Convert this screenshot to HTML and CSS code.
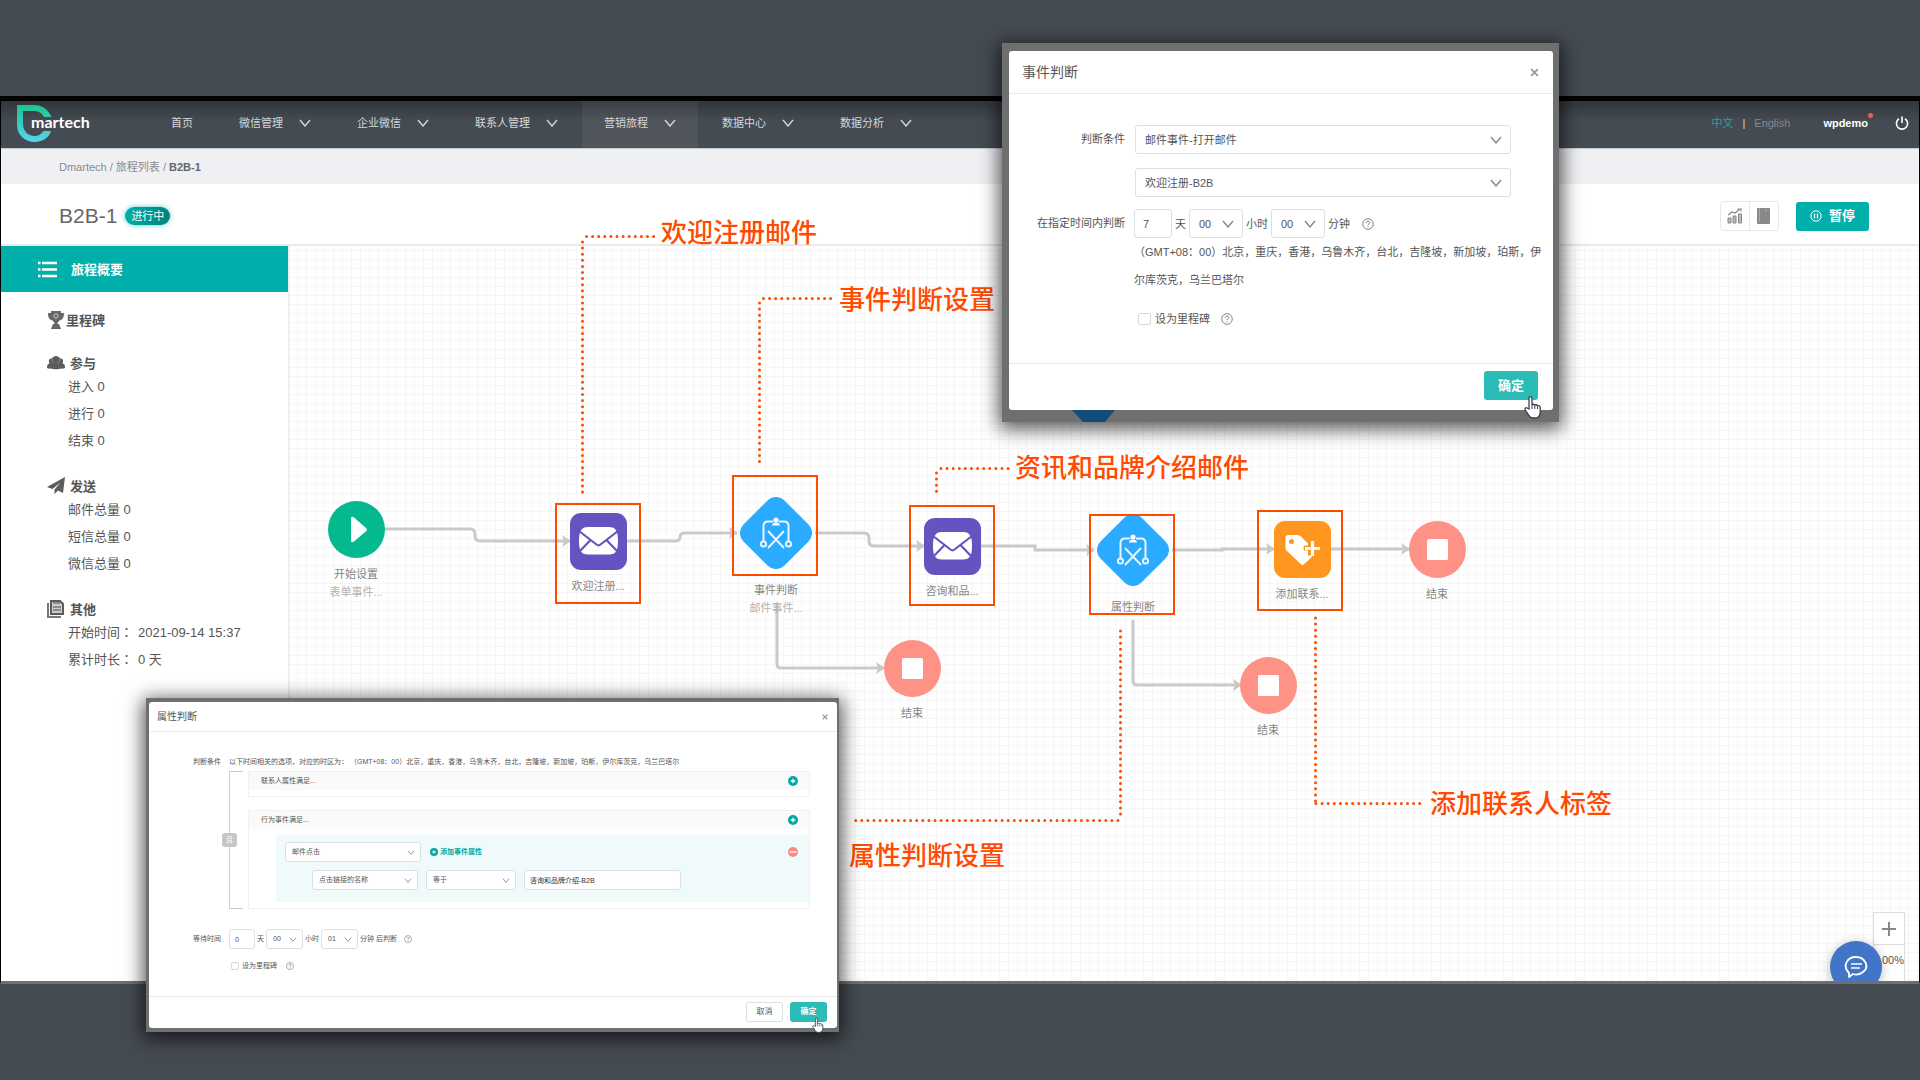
FILE: index.html
```html
<!DOCTYPE html>
<html lang="zh-CN">
<head>
<meta charset="utf-8">
<title>Dmartech - B2B-1</title>
<link rel="stylesheet" href="styles.css">
</head>
<body>
<svg class="defs" width="0" height="0" aria-hidden="true">
  <defs>
    <linearGradient id="logo-fill" x1="0" y1="0" x2="0" y2="1"><stop offset="0" stop-color="#1dc48f"/><stop offset="1" stop-color="#55d5ee"/></linearGradient>
    <symbol id="chevron" viewBox="0 0 12 8"><path d="M1 1l5 6 5-6" fill="none" stroke="currentColor" stroke-width="1.4"/></symbol>
    <symbol id="help" viewBox="0 0 12 12"><circle cx="6" cy="6" r="5.3" fill="none" stroke="currentColor" stroke-width=".9"/><path d="M4.3 4.8c0-2.2 3.4-2.2 3.4-.2C7.7 5.800 6 5.800 6 7.100M6 8.200v1" fill="none" stroke="currentColor"/></symbol>
    <symbol id="plus" viewBox="0 0 10 10"><circle cx="5" cy="5" r="5" fill="#00a9a3"/><path d="M5 2.700v4.600M2.700 5h4.600" stroke="#fff" stroke-width="1.300"/></symbol>
    <symbol id="minus" viewBox="0 0 10 10"><circle cx="5" cy="5" r="5" fill="#f98a80"/><path d="M1.500 5h7" stroke="#fff" stroke-width="1.300"/></symbol>
    <symbol id="close" viewBox="0 0 8 8"><path d="M1 1l6 6M7 1L1 7" stroke="currentColor" stroke-width="1.600"/></symbol>
    <symbol id="hand" viewBox="0 0 18 24"><path d="M5 14V3.200C5 1 8 1 8 3.200V10c.6-1.100 2.500-1 2.800.3.700-1 2.500-.7 2.700.7 1-.7 2.700-.2 2.700 1.300V17c0 3.500-1.700 6-5 6H9c-2 0-3.200-1-4.200-2.700L1.300 15c-1-1.700.8-3 2.200-1.800z" fill="#fff" stroke="#3a3f55" stroke-width="1.300"/><path d="M8 10v4M10.800 11v3M13.500 12v2" stroke="#3a3f55"/></symbol>
    <symbol id="n-start" viewBox="0 0 57 57"><circle cx="28.500" cy="28.500" r="28.500" fill="#04b98d"/><path d="M23 17.500v22c0 2 1.600 2.300 3 1.100l12-10.300c1.200-1 1.200-2.200 0-3.200L26 16.600c-1.400-1.300-3-1-3 .9z" fill="#fff"/></symbol>
    <symbol id="n-mail" viewBox="0 0 57 57"><rect width="57" height="57" rx="11" fill="#6354c0"/><path d="M9 28c0-9.500 2-14 9-14h21c7 0 9 4.500 9 14s-2 13.500-9 13.500H18C11 41.500 9 37.500 9 28z" fill="#fff"/><path d="M9 18l17.500 13.500c1.300 1 2.700 1 4 0L48 18M10 38l10.500-11M47 38L36.500 27" fill="none" stroke="#6354c0" stroke-width="2.200"/></symbol>
    <symbol id="n-judge" viewBox="0 0 72 72"><rect x="7" y="7" width="58" height="58" rx="12" transform="rotate(45 36 36)" fill="#2aabff"/><g fill="none" stroke="#e8f6ff" stroke-width="2"><path d="M33 24.500h-5c-3 0-4.500 1.500-4.500 4.500v15M39 24.500h5c3 0 4.500 1.500 4.500 4.500v15M28 34l16 17M44 34L28 51"/><circle cx="23.500" cy="47" r="2.600"/><circle cx="48.500" cy="47" r="2.600"/></g><circle cx="36" cy="23" r="2.600" fill="#fff"/><path d="M32 28.500c0-4 8-4 8 0z" fill="#fff"/></symbol>
    <symbol id="n-tag" viewBox="0 0 57 57"><rect width="57" height="57" rx="11" fill="#ff961f"/><path d="M11.500 17c0-2 1-3 3-3h8c2 0 3.500.6 5 2l6.500 6.500v2H31c-2 0-2 5 0 5h3v5h3.500c1 .5.400 1.200-.3 2l-7 6.500c-1.300 1.200-2.200 1.200-3.500 0L13 30c-1-1-1.500-2-1.500-3.500z" fill="#fff"/><circle cx="17.500" cy="20.500" r="2.500" fill="#ff961f"/><path d="M38.500 20v15M31 27.500h15" stroke="#fff" stroke-width="3.200"/></symbol>
    <symbol id="n-end" viewBox="0 0 57 57"><circle cx="28.500" cy="28.500" r="28.500" fill="#ff9286"/><rect x="18" y="18" width="21" height="21" rx="1.500" fill="#fff"/></symbol>
    <marker id="arrow" viewBox="0 0 9 12" refX="8" refY="6" markerWidth="9" markerHeight="12" markerUnits="userSpaceOnUse" orient="auto"><path d="M0 0l9 6-9 6 2-6z" fill="#c9c9c9"/></marker>
  </defs>
</svg>

<div class="page">
  <div class="screen">
    <header class="topbar">
      <a class="logo" href="#" aria-label="Dmartech">
        <svg class="logo-mark" viewBox="0 0 35 37"><path d="M0 0h17c8 0 14 4 17.500 12h-7.500C25 8 21 6 17 6H6v13c0 7 5 12 11.500 12 4 0 7-2 9-5H34c-2 7-9 11-16.500 11C8 37 0 30 0 20z" fill="url(#logo-fill)"/></svg>
        <span class="logo-text">martech</span>
      </a>
      <nav class="menu">
        <a href="#">首页</a>
        <a href="#">微信管理<svg class="chev"><use href="#chevron"/></svg></a>
        <a href="#">企业微信<svg class="chev"><use href="#chevron"/></svg></a>
        <a href="#">联系人管理<svg class="chev"><use href="#chevron"/></svg></a>
        <a href="#" class="active">营销旅程<svg class="chev"><use href="#chevron"/></svg></a>
        <a href="#">数据中心<svg class="chev"><use href="#chevron"/></svg></a>
        <a href="#">数据分析<svg class="chev"><use href="#chevron"/></svg></a>
      </nav>
      <div class="account">
        <a href="#" class="lang-on">中文</a><span class="bar">|</span><a href="#" class="lang-off">English</a>
        <a href="#" class="user">wpdemo</a>
        <button class="power" aria-label="退出"><svg viewBox="0 0 14 14"><path d="M4 2.800a5.600 5.600 0 1 0 6 0M7 .5V7" fill="none" stroke="#fff" stroke-width="1.600"/></svg></button>
      </div>
    </header>
    <div class="crumbs"><a href="#">Dmartech</a>&nbsp;/&nbsp;<a href="#">旅程列表</a>&nbsp;/&nbsp;<b>B2B-1</b></div>
    <div class="heading">
      <h1>B2B-1</h1><span class="status">进行中</span>
      <div class="tools">
        <button aria-label="统计"><svg viewBox="0 0 16 16"><path d="M1 10h3v5H1zM6 8h3v7H6zM11.500 6h3v9h-3z" fill="#bbb" stroke="#888"/><path d="M1 7l4-3 3 1 5-4M10.500 1H14v2.500" fill="none" stroke="#888" stroke-width="1.200"/></svg></button>
        <button aria-label="日志"><svg viewBox="0 0 16 16"><rect x="1" width="13" height="16" rx="1" fill="#888"/><path d="M3.500 0v14M10 1v3" stroke="#aaa"/></svg></button>
      </div>
      <button class="pause"><svg viewBox="0 0 12 12"><circle cx="6" cy="6" r="5.200" fill="none" stroke="#fff"/><path d="M4.500 3.500v5M7.500 3.500v5" stroke="#fff" stroke-width="1.300"/></svg>暂停</button>
    </div>
    <div class="workspace">
      <aside class="sidebar">
        <h2><svg viewBox="0 0 19 17"><path d="M4 2h15M4 8.500h15M4 15h15M0 2h2.500M0 8.500h2.500M0 15h2.500" stroke="#fff" stroke-width="2.600"/></svg>旅程概要</h2>
        <section class="milestone">
          <h3><svg viewBox="0 0 18 18"><path d="M4 0h10v2h3c0 5-2 7-4.500 7.500-1 1-2 1.500-2 3.500h1.500l2 5H4l2-5h1.500c0-2-1-2.500-2-3.500C3 9 1 7 1 2h3z" fill="#666"/><circle cx="9" cy="5" r="2.200" fill="none" stroke="#ccc"/></svg>里程碑</h3>
        </section>
        <section>
          <h3><svg viewBox="0 0 18 18"><path d="M0 14c0-3 .5-4 2.500-4.500C1 6 2.500 4 5 4.500c1-3.500 7-3.500 8 0 2.500-.5 4 1.500 2.500 5C17.500 10 18 11 18 14c-1 .7-3 .8-4 .5-1 1-9 1-10 0-1 .3-3 .2-4-.5z" fill="#5c5c5c"/><path d="M5.500 5c-.5 2 0 3 1 4.500M12.500 5c.5 2 0 3-1 4.500" fill="none" stroke="#999" stroke-width=".7"/></svg>参与</h3>
          <p>进入 0</p><p>进行 0</p><p>结束 0</p>
        </section>
        <section>
          <h3><svg viewBox="0 0 18 18"><path d="M0 10L18 0l-2 16-5-2.500L7.500 17v-4.500L13.500 5.500 5.500 12z" fill="#5c5c5c"/></svg>发送</h3>
          <p>邮件总量 0</p><p>短信总量 0</p><p>微信总量 0</p>
        </section>
        <section>
          <h3><svg viewBox="0 0 18 18"><path d="M1 3v14h13" fill="none" stroke="#777" stroke-width="2"/><path d="M5 1h8l3 3v10H4V1z" fill="#ccc" stroke="#5c5c5c" stroke-width="2"/><path d="M6 3h7M6 7h8M6 10h8" stroke="#777" stroke-width="1.500"/></svg>其他</h3>
          <p><span class="key" lang="zh-TW">开始时间：</span>2021-09-14 15:37</p><p><span class="key" lang="zh-TW">累计时长：</span>0 天</p>
        </section>
      </aside>
      <main class="canvas">
        <div class="zoom"><button aria-label="放大"><svg viewBox="0 0 14 14"><path d="M7 0v14M0 7h14" stroke="#888" stroke-width="2"/></svg></button><span>100%</span></div>
        <button class="chat" aria-label="在线客服"><svg viewBox="0 0 24 24"><path d="M5 22v-4C-2 11 3 2 12 2s14 10 7 15c-3 2.500-7 3-10 2z" fill="none" stroke="#fff" stroke-width="1.800" stroke-linejoin="round"/><path d="M7 9h11M7 13h9" stroke="#fff" stroke-width="1.600"/></svg></button>
      </main>
    </div>
  </div>

  <div class="board">
    <svg class="edges">
      <g fill="none" stroke="#c9c9c9" stroke-width="3">
        <path d="M384 529h86q5 0 5 5v2q0 5 5 5h90" marker-end="url(#arrow)"/>
        <path d="M626 541h49q5 0 5-4t5-4h52" marker-end="url(#arrow)"/>
        <path d="M815 533h49q5 0 5 5v3q0 5 5 5h50" marker-end="url(#arrow)"/>
        <path d="M777 603v61q0 4 4 4h103" marker-end="url(#arrow)"/>
        <path d="M980 546h55v4h59" marker-end="url(#arrow)"/>
        <path d="M1133 620v61q0 4 4 4h104" marker-end="url(#arrow)"/>
        <path d="M1172 550h50v-1h52" marker-end="url(#arrow)"/>
        <path d="M1330 549h79" marker-end="url(#arrow)"/>
      </g>
    </svg>
    <div class="node start"><svg><use href="#n-start"/></svg><span>开始设置</span><small>表单事件...</small></div>
    <div class="node mail-a"><svg><use href="#n-mail"/></svg><span>欢迎注册...</span></div>
    <div class="node judge judge-a"><svg><use href="#n-judge"/></svg><span>事件判断</span><small>邮件事件...</small></div>
    <div class="node end-a"><svg><use href="#n-end"/></svg><span>结束</span></div>
    <div class="node mail-b"><svg><use href="#n-mail"/></svg><span>咨询和品...</span></div>
    <div class="node judge judge-b"><svg><use href="#n-judge"/></svg><span>属性判断</span></div>
    <div class="node end-b"><svg><use href="#n-end"/></svg><span>结束</span></div>
    <div class="node tag"><svg><use href="#n-tag"/></svg><span>添加联系...</span></div>
    <div class="node end-c"><svg><use href="#n-end"/></svg><span>结束</span></div>

    <i class="frame f1"></i><i class="frame f2"></i><i class="frame f3"></i><i class="frame f4"></i><i class="frame f5"></i>
    <svg class="edges">
      <g fill="none" stroke="#ff4a00" stroke-width="3" stroke-linecap="round" stroke-dasharray="0 6.100">
        <path d="M586.500 236.500h71M582.500 242v251M763.500 298.500h71M759.500 303v162M941 468.500h71M936.500 473v22M1120.500 631v187M1118 820.500H851M1315.500 618v185M1316 803.500h108"/>
      </g>
    </svg>
    <strong class="note t1">欢迎注册邮件</strong>
    <strong class="note t2">事件判断设置</strong>
    <strong class="note t3">资讯和品牌介绍邮件</strong>
    <strong class="note t4">添加联系人标签</strong>
    <strong class="note t5">属性判断设置</strong>
  </div>

  <div class="backdrop event-dialog">
    <svg class="peek" viewBox="0 0 43 12"><path d="M0 0h43L33 12H11z" fill="#134c78"/></svg>
    <form class="dialog">
      <header><h2>事件判断</h2><button type="button" class="x" aria-label="关闭"><svg><use href="#close"/></svg></button></header>
      <div class="fields">
        <label for="cond">判断条件</label>
        <div class="stack">
          <select id="cond"><option>邮件事件-打开邮件</option></select>
          <select aria-label="邮件"><option>欢迎注册-B2B</option></select>
        </div>
        <label for="days">在指定时间内判断</label>
        <div class="time">
          <input id="days" type="text" value="7">天<select aria-label="小时"><option>00</option></select>小时<select aria-label="分钟"><option>00</option></select>分钟<svg class="help"><use href="#help"/></svg>
        </div>
        <p>（GMT+08：00）北京，重庆，香港，乌鲁木齐，台北，吉隆坡，新加坡，珀斯，伊尔库茨克，乌兰巴塔尔</p>
        <div class="check"><input type="checkbox" id="ms1"><label for="ms1">设为里程碑</label><svg class="help"><use href="#help"/></svg></div>
      </div>
      <footer><button type="button" class="ok">确定</button></footer>
    </form>
    <svg class="pointer"><use href="#hand"/></svg>
  </div>

  <div class="backdrop attr-dialog">
    <form class="dialog">
      <header><h2>属性判断</h2><button type="button" class="x" aria-label="关闭"><svg><use href="#close"/></svg></button></header>
      <div class="fields">
        <span class="lbl">判断条件</span>
        <span>以下时间相关的选项，对应的时区为： （GMT+08：00）北京，重庆，香港，乌鲁木齐，台北，吉隆坡，新加坡，珀斯，伊尔库茨克，乌兰巴塔尔</span>
        <div class="group">
          <div class="bracket"><button type="button">且</button></div>
          <div class="panels">
            <section class="panel"><h3>联系人属性满足...<button type="button" aria-label="添加"><svg><use href="#plus"/></svg></button></h3></section>
            <section class="panel">
              <h3>行为事件满足...<button type="button" aria-label="添加"><svg><use href="#plus"/></svg></button></h3>
              <div class="rule">
                <div class="line"><select class="w-event" aria-label="事件"><option>邮件点击</option></select><button type="button" class="add"><svg><use href="#plus"/></svg>添加事件属性</button><button type="button" class="del" aria-label="删除"><svg><use href="#minus"/></svg></button></div>
                <div class="line inner"><select class="w-name" aria-label="属性"><option>点击链接的名称</option></select><select class="w-op" aria-label="条件"><option>等于</option></select><input class="w-value" type="text" aria-label="值" value="咨询和品牌介绍-B2B"></div>
              </div>
            </section>
          </div>
        </div>
        <label for="wait" class="lbl">等待时间</label>
        <div class="time">
          <input id="wait" type="text" value="0">天<select aria-label="小时"><option>00</option></select>小时<select aria-label="分钟"><option>01</option></select><span>分钟 后判断</span><svg class="help"><use href="#help"/></svg>
        </div>
        <div class="check"><input type="checkbox" id="ms2"><label for="ms2">设为里程碑</label><svg class="help"><use href="#help"/></svg></div>
      </div>
      <footer><button type="button" class="cancel">取消</button><button type="button" class="ok">确定</button></footer>
    </form>
    <svg class="pointer"><use href="#hand"/></svg>
  </div>
</div>
</body>
</html>
```
FILE: styles.css
```css
* { box-sizing: border-box; }
body, h1, h2, h3, p { margin: 0; }
body {
  background: #454b52;
  color: #555;
  font: 11px/16px "Liberation Sans", "Noto Sans CJK SC", sans-serif;
}
a { color: inherit; text-decoration: none; }
button, input, select { font: inherit; color: inherit; margin: 0; }
button { border: 0; background: none; padding: 0; }
svg { display: block; }
.defs { position: absolute; }

.page {
  position: relative;
  display: flex;
  flex-direction: column;
  min-height: 100vh;
  padding: 96px 0;
  overflow: hidden;
}
.screen {
  flex: 1;
  display: flex;
  flex-direction: column;
  border: 1px solid #000;
  border-top-width: 5px;
  border-bottom: 3px solid #6d6f70;
  background: #fff;
}

/* Top navigation */
.topbar {
  display: flex;
  align-items: center;
  height: 48px;
  background: linear-gradient(#31363b, #454b52 20px);
  border-bottom: 1px solid #c5cbd3;
  color: #d5d7d9;
}
.logo { display: flex; width: 148px; padding: 0 0 3px 16px; }
.logo-mark { width: 35px; height: 37px; }
.logo-text {
  align-self: center;
  margin-left: -21px;
  padding-bottom: 3px;
  color: #fff;
  font: bold 16px/20px Lato, sans-serif;
}
.menu { display: flex; align-self: stretch; gap: 2px; }
.menu a { display: flex; align-items: center; padding: 0 22px 3px; gap: 16px; }
.menu .active { background: linear-gradient(#3a3e43, #50555c 20px); }
.chev { width: 12px; height: 8px; }
.account { display: flex; align-items: center; margin-left: auto; padding: 0 10px 4px 0; }
.lang-on { color: #17a89f; }
.bar { margin: 0 9px; }
.lang-off { color: #85898d; }
.user { position: relative; margin: 0 27px 0 33px; color: #fff; font-weight: bold; }
.user::after {
  content: "";
  position: absolute;
  top: -2px;
  right: -5px;
  width: 5px;
  height: 5px;
  border-radius: 50%;
  background: #f0604f;
}
.power svg { width: 14px; height: 14px; }

.crumbs {
  display: flex;
  align-items: center;
  height: 35px;
  padding-left: 58px;
  background: #eff0f4;
  color: #8a8a8a;
}
.crumbs b { color: #666; }

.heading {
  display: flex;
  align-items: center;
  height: 62px;
  padding: 4px 50px 0 58px;
  border-bottom: 2px solid #e9e9e9;
}
h1 { color: #666; font-size: 21px; line-height: 28px; font-weight: normal; }
.status {
  margin-left: 8px;
  padding: 1px 6px;
  border-radius: 9px;
  background: linear-gradient(90deg, #00afa9, #00827d);
  box-shadow: 0 0 5px #4fc9c5;
  color: #fff;
}
.tools { display: flex; margin: 0 17px 0 auto; border: 1px solid #e6e8ea; border-radius: 4px; }
.tools button { padding: 6px; }
.tools button + button { border-left: 1px solid #e6e8ea; }
.tools svg { width: 16px; height: 16px; }
.pause {
  display: flex;
  align-items: center;
  justify-content: center;
  gap: 7px;
  width: 73px;
  height: 29px;
  border-radius: 3px;
  background: #00afaa;
  color: #fff;
  font-size: 13px;
  font-weight: bold;
}
.pause svg { width: 12px; height: 12px; }

/* Journey overview */
.workspace { flex: 1; display: flex; }
.sidebar {
  width: 289px;
  border-right: 2px solid #f0f0f0;
  font-size: 13px;
  line-height: 27px;
}
.sidebar h2 {
  display: flex;
  align-items: center;
  gap: 14px;
  height: 46px;
  padding-left: 37px;
  background: #00afaa;
  color: #fff;
  font-size: 13px;
}
.sidebar h2 svg { width: 19px; height: 17px; }
.sidebar section { padding: 0 0 22px 46px; }
.sidebar section.milestone { padding-top: 17px; padding-bottom: 22px; }
.sidebar h3 { display: flex; align-items: center; gap: 5px; height: 20px; font-size: 13px; }
.milestone h3 { height: 22px; gap: 1px; }
.sidebar h3 svg { width: 18px; height: 18px; }
.sidebar p { padding-left: 21px; }
.key { display: inline-block; width: 70px; font-family: "Noto Sans CJK TC", sans-serif; line-height: 16px; }

.canvas {
  position: relative;
  flex: 1;
  overflow: hidden;
  background:
    linear-gradient(90deg, #f6f6f6 1px, transparent 1px) 7px 0 / 9px 9px,
    linear-gradient(#f6f6f6 1px, transparent 1px) 0 4px / 9px 9px,
    #fff;
}
.zoom { position: absolute; right: 14px; bottom: -27px; width: 32px; background: #fff; border: 1px solid #ddd; height: 96px; }
.zoom button { display: grid; place-items: center; width: 100%; height: 32px; border-bottom: 1px solid #ddd; }
.zoom button svg { width: 14px; height: 14px; }
.zoom span { display: block; height: 32px; line-height: 30px; text-align: right; }
.chat {
  position: absolute;
  right: 37px;
  bottom: -12px;
  display: grid;
  place-items: center;
  width: 52px;
  height: 52px;
  border-radius: 50%;
  background: #4275c8;
  box-shadow: 0 2px 12px #0004;
}
.chat svg { width: 24px; height: 24px; }

/* Flow diagram */
.board, .edges { position: absolute; top: 0; left: 0; width: 100%; height: 100%; }
.node { position: absolute; width: 90px; text-align: center; line-height: 18px; color: #858585; }
.node svg { width: 57px; height: 57px; margin: 0 auto 7px; }
.node.judge svg { width: 72px; height: 72px; margin-bottom: 12px; }
.node span, .node small { display: block; font-size: 11px; }
.node small { color: #b3b3b3; }
.start { left: 311px; top: 501px; }
.mail-a { left: 553px; top: 513px; }
.judge-a { left: 731px; top: 497px; }
.end-a { left: 867px; top: 640px; }
.mail-b { left: 907px; top: 518px; }
.judge-b { left: 1088px; top: 514px; }
.end-b { left: 1223px; top: 657px; }
.tag { left: 1257px; top: 521px; }
.end-c { left: 1392px; top: 521px; }

.frame { position: absolute; width: 86px; height: 101px; border: 2px solid #ff4a00; }
.f1 { left: 555px; top: 503px; }
.f2 { left: 732px; top: 475px; }
.f3 { left: 909px; top: 505px; }
.f4 { left: 1089px; top: 514px; }
.f5 { left: 1257px; top: 510px; }
.note { position: absolute; color: #ff4a00; font-size: 26px; line-height: 36px; font-weight: 500; white-space: nowrap; }
.t1 { left: 661px; top: 215px; }
.t2 { left: 839px; top: 282px; }
.t3 { left: 1015px; top: 450px; }
.t4 { left: 1430px; top: 786px; }
.t5 { left: 849px; top: 838px; }

/* Dialogs */
.backdrop { position: absolute; background: #6f6f6f; box-shadow: 0 4px 18px 3px #000a; }
.dialog { background: #fff; border-radius: 3px; }
.dialog header { display: flex; align-items: center; justify-content: space-between; border-bottom: 1px solid #ececec; }
.dialog h2 { font-weight: normal; color: #555; }
.x { color: #999; }
.dialog input[type="text"], .dialog select {
  height: 29px;
  border: 1px solid #dcdfe6;
  border-radius: 3px;
  background-color: #fff;
  outline: 0;
}
.dialog select {
  appearance: none;
  padding: 0 9px;
  background-image: url("data:image/svg+xml,%3Csvg xmlns='http://www.w3.org/2000/svg' viewBox='0 0 12 8'%3E%3Cpath d='M1 1l5 6 5-6' fill='none' stroke='%23888' stroke-width='1.4'/%3E%3C/svg%3E");
  background-repeat: no-repeat;
  background-position: right 8px center;
  background-size: 12px 8px;
}
.dialog input[type="checkbox"] { appearance: none; border: 1px solid #d5d8dc; border-radius: 2px; background: #fff; }
.time, .check { display: flex; align-items: center; white-space: nowrap; }
.help { color: #777; }
.dialog footer { display: flex; justify-content: flex-end; border-top: 1px solid #e6e6e6; }
.ok { background: #2cbcb7; color: #fff; border-radius: 3px; font-weight: bold; }
.pointer { position: absolute; }

.event-dialog { top: 43px; left: 1002px; width: 557px; padding: 8px 6px 12px 7px; }
.event-dialog .peek { position: absolute; left: 70px; bottom: 0; width: 43px; height: 12px; }
.event-dialog header { height: 43px; padding: 0 14px 0 13px; }
.event-dialog h2 { font-size: 14px; }
.event-dialog .x svg { width: 9px; height: 9px; }
.event-dialog .fields {
  display: grid;
  grid-template-columns: 116px 1fr;
  column-gap: 9px;
  padding: 31px 15px 36px 0;
}
.event-dialog .fields > label { text-align: right; line-height: 29px; }
.event-dialog .stack { display: grid; gap: 14px; margin: 0 27px 12px 1px; }
.event-dialog .time { gap: 3px; }
.event-dialog .time input { width: 38px; padding: 0 8px; }
.event-dialog .time select { width: 54px; }
.event-dialog .time .help { margin-left: 9px; }
.event-dialog .help { width: 12px; height: 12px; }
.event-dialog p { grid-column: 2; line-height: 28px; margin-right: -5px; }
.event-dialog .check { grid-column: 2; gap: 4px; margin: 17px 0 0 4px; }
.event-dialog .check input { width: 13px; height: 12px; }
.event-dialog .check .help { margin-left: 7px; }
.event-dialog footer { padding: 7px 15px 10px; }
.event-dialog .ok { width: 54px; height: 29px; font-size: 13px; }
.event-dialog .pointer { right: 17px; bottom: 3px; width: 18px; height: 24px; }

.attr-dialog { top: 698px; left: 146px; width: 693px; padding: 4px 2px 4px 3px; font-size: 7px; line-height: 12px; }
.attr-dialog header { height: 30px; padding: 0 9px 0 8px; }
.attr-dialog h2 { font-size: 10px; }
.attr-dialog .x svg { width: 6px; height: 6px; }
.attr-dialog .fields {
  display: grid;
  grid-template-columns: 72px 1fr;
  column-gap: 8px;
  padding: 24px 27px 24px 0;
}
.attr-dialog .lbl { text-align: right; }
.attr-dialog .fields > label { line-height: 20px; }
.attr-dialog input[type="text"], .attr-dialog select { height: 20px; }
.attr-dialog select { padding: 0 6px; background-size: 8px 5px; background-position: right 5px center; }
.group { grid-column: 2; display: flex; margin: 3px 0 20px; }
.bracket { display: flex; align-items: center; width: 14px; margin-right: 5px; border: 1px solid #ccc; border-right: 0; }
.bracket button { flex: none; width: 15px; height: 14px; margin-left: -8px; border-radius: 3px; background: #c6c6c6; color: #fff; }
.panels { flex: 1; display: grid; gap: 13px; }
.panel { border: 1px solid #f0f0f0; padding-bottom: 6px; }
.panel h3 { display: flex; justify-content: space-between; align-items: center; height: 18px; padding: 0 11px 0 12px; background: #fafafa; font-size: 7px; font-weight: normal; }
.panel h3 svg, .del svg { width: 10px; height: 10px; }
.rule { display: grid; gap: 8px; margin: 6px 0 0 27px; padding: 7px 11px 12px 9px; background: #f0fafa; }
.line { display: flex; align-items: center; }
.inner { padding-left: 27px; gap: 8px; }
.w-event { width: 136px; }
.w-name { width: 106px; }
.w-op { width: 90px; }
.w-value { width: 157px; padding: 0 5px; color: #333; }
.add { display: flex; align-items: center; gap: 2px; margin-left: 9px; color: #00a9a3; font-weight: bold; }
.add svg { width: 8px; height: 8px; }
.del { margin-left: auto; }
.attr-dialog .time { gap: 2px; }
.attr-dialog .time input { width: 26px; padding: 0 5px; }
.attr-dialog .time select { width: 37px; }
.attr-dialog .help { width: 8px; height: 8px; }
.attr-dialog .time .help { margin-left: 5px; }
.attr-dialog .check { grid-column: 2; gap: 3px; margin: 11px 0 0 2px; }
.attr-dialog .check input { width: 8px; height: 8px; }
.attr-dialog .check .help { margin-left: 6px; }
.attr-dialog footer { gap: 7px; padding: 5px 10px 6px; font-size: 8px; }
.attr-dialog footer button { width: 37px; height: 20px; }
.cancel { border: 1px solid #dcdfe6; border-radius: 2px; }
.attr-dialog .pointer { right: 15px; bottom: -1px; width: 12px; height: 16px; }
```
